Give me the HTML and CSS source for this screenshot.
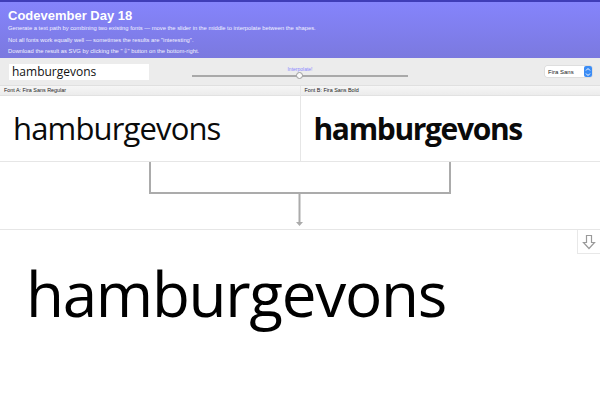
FILE: index.html
```html
<!DOCTYPE html>
<html>
<head>
<meta charset="utf-8">
<link rel="stylesheet" href="styles.css">
</head>
<body>
<header class="hero">
  <h1 class="title">Codevember Day 18</h1>
  <p class="desc">Generate a text path by combining two existing fonts — move the slider in the middle to interpolate between the shapes.</p>
  <p class="desc">Not all fonts work equally well — sometimes the results are "interesting".</p>
  <p class="desc">Download the result as SVG by clicking the "⇩" button on the bottom-right.</p>
</header>
<div class="toolbar">
  <div class="text-input">hamburgevons</div>
  <div class="slider">
    <span class="slider-label">Interpolate!</span>
    <div class="track"><span class="thumb"></span></div>
  </div>
  <div class="select">
    <span class="select-text">Fira Sans</span>
    <span class="select-arrows">
      <svg width="8" height="12" viewBox="0 0 8 12"><path d="M2 4.5 L4 2.5 L6 4.5 M2 7.5 L4 9.5 L6 7.5" fill="none" stroke="#fff" stroke-width="1"/></svg>
    </span>
  </div>
</div>
<div class="fonts">
  <div class="font-col">
    <div class="font-label">Font A: Fira Sans Regular</div>
    <div class="sample sample-regular">hamburgevons</div>
  </div>
  <div class="font-col">
    <div class="font-label">Font B: Fira Sans Bold</div>
    <div class="sample sample-bold">hamburgevons</div>
  </div>
</div>
<div class="connector">
  <svg width="600" height="67" viewBox="0 0 600 67">
    <path d="M150 0 V31 H450 V0" fill="none" stroke="#ababab" stroke-width="2"/>
    <path d="M299.5 31 V62" fill="none" stroke="#ababab" stroke-width="2"/>
    <path d="M296 60 L303 60 L299.5 64 Z" fill="#ababab"/>
  </svg>
</div>
<div class="output">
  <div class="result">hamburgevons</div>
  <div class="download">
    <svg width="14" height="16" viewBox="0 0 14 16"><path d="M4.5 1.5 H9.5 V8.5 H12.5 L7 14.5 L1.5 8.5 H4.5 Z" fill="none" stroke="#9a9a9a" stroke-width="1.2"/></svg>
  </div>
</div>
</body>
</html>
```
FILE: styles.css
```css
html, body {
  margin: 0;
  padding: 0;
  background: #fff;
  width: 600px;
  overflow: hidden;
}
body {
  font-family: "Liberation Sans", Arial, sans-serif;
}
.hero {
  height: 56px;
  border-top: 2px solid #3f3db8;
  background: linear-gradient(#8584fc, #7b79df);
  color: #fff;
  padding: 0 8px;
  box-sizing: content-box;
}
.title {
  margin: 0;
  padding-top: 6px;
  font-size: 13px;
  font-weight: bold;
  line-height: 16px;
}
.desc {
  margin: 0;
  font-size: 5.8px;
  line-height: 11.5px;
  color: #f2f2ff;
}
.desc:first-of-type {
  margin-top: -1px;
}
.toolbar {
  height: 28px;
  background: #ececec;
  display: flex;
  align-items: center;
  padding: 0 8px 0 9px;
  border-bottom: 1px solid #e0e0e0;
  box-sizing: border-box;
}
.text-input {
  width: 140px;
  height: 16px;
  background: #fff;
  font-family: "Open Sans", sans-serif;
  font-size: 12px;
  line-height: 16px;
  padding-left: 3px;
  box-sizing: border-box;
  color: #111;
}
.slider {
  margin-left: 43px;
  width: 216px;
  display: flex;
  flex-direction: column;
  align-items: center;
}
.slider-label {
  font-size: 5px;
  color: #8a86ff;
  line-height: 6px;
}
.track {
  width: 216px;
  height: 2px;
  background: #a9a9a9;
  margin-top: 3px;
  position: relative;
}
.thumb {
  position: absolute;
  left: 104px;
  top: -3px;
  width: 7px;
  height: 7px;
  border-radius: 50%;
  background: #fafafa;
  border: 1px solid #9b9b9b;
  box-sizing: border-box;
}
.select {
  margin-left: auto;
  display: flex;
  align-items: center;
  height: 11px;
  width: 47px;
  background: #fff;
  border-radius: 2px;
  box-shadow: 0 0 0 0.5px #d0d0d0;
}
.select-text {
  flex: 1;
  font-size: 6px;
  padding-left: 3px;
  color: #222;
}
.select-arrows {
  width: 8px;
  height: 11px;
  background: #3b8cf5;
  border-radius: 2px;
  display: flex;
  align-items: center;
  justify-content: center;
}
.fonts {
  display: flex;
  border-bottom: 1px solid #e6e6e6;
}
.font-col {
  flex: 1;
}
.font-col + .font-col {
  border-left: 1px solid #e6e6e6;
}
.font-label {
  height: 9px;
  background: linear-gradient(#f6f6f6, #ececec);
  font-size: 5.4px;
  line-height: 9px;
  padding-left: 4px;
  color: #222;
  border-bottom: 1px solid #e2e2e2;
}
.sample {
  height: 65px;
  font-family: "Open Sans", sans-serif;
  font-size: 31px;
  line-height: 65px;
  padding-left: 13px;
  color: #0a0a0a;
  letter-spacing: -0.85px;
}
.sample-bold {
  font-weight: bold;
  font-size: 30px;
  letter-spacing: -1.35px;
}
.connector {
  height: 67px;
  border-bottom: 1px solid #e6e6e6;
}
.connector svg {
  display: block;
}
.output {
  position: relative;
  height: 171px;
}
.result {
  font-family: "Open Sans", sans-serif;
  font-size: 62px;
  line-height: 60px;
  padding-top: 33px;
  padding-left: 26px;
  color: #000;
  letter-spacing: -1.3px;
}
.download {
  position: absolute;
  right: 0;
  top: 0;
  width: 22px;
  height: 23px;
  border-left: 1px solid #e8e8e8;
  border-bottom: 1px solid #e8e8e8;
  display: flex;
  align-items: center;
  justify-content: center;
}
```
